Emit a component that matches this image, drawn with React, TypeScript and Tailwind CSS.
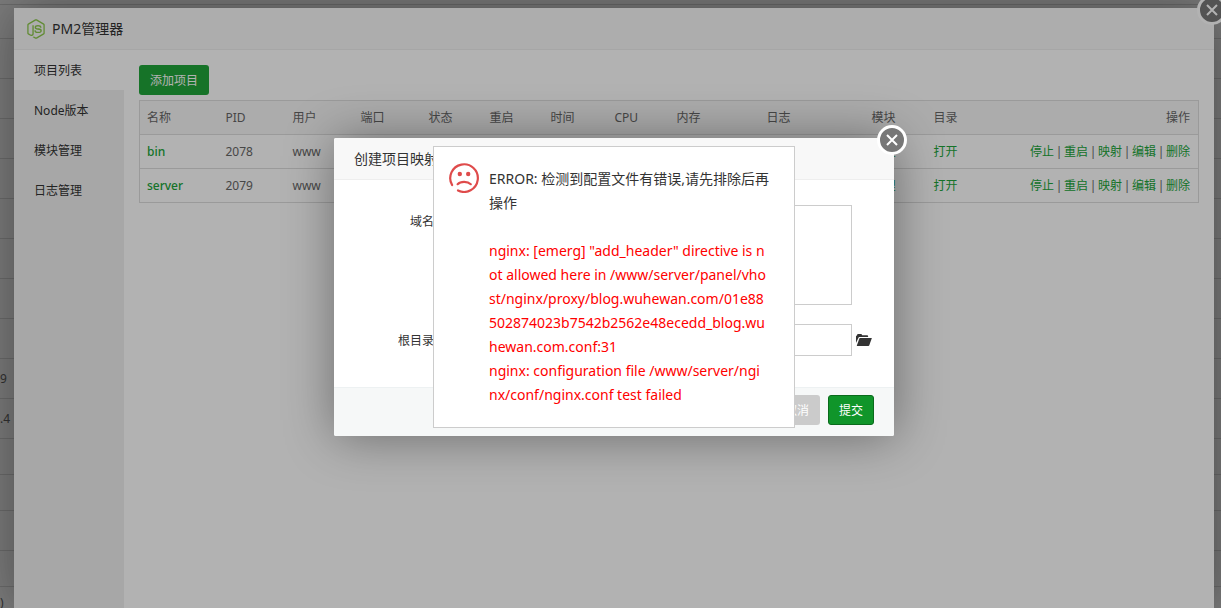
import type { ReactNode } from "react";
import { FaNodeJs } from "react-icons/fa";

const backdropRows: { height: string; text?: string }[] = [
  { height: "h-[5px]" },
  { height: "h-[34px]" },
  { height: "h-10" },
  { height: "h-10" },
  { height: "h-10" },
  { height: "h-10" },
  { height: "h-10" },
  { height: "h-10" },
  { height: "h-10" },
  { height: "h-10" },
  { height: "h-10", text: "9" },
  { height: "h-10", text: ".4" },
  { height: "h-9" },
  { height: "h-9" },
  { height: "h-10" },
  { height: "h-9" },
  { height: "h-8", text: ")" },
];

const menu = ["项目列表", "Node版本", "模块管理", "日志管理"];

const columns = [
  { label: "名称", width: "w-[79px]" },
  { label: "PID", width: "w-[67px]" },
  { label: "用户", width: "w-[68px]" },
  { label: "端口", width: "w-[68px]" },
  { label: "状态", width: "w-[61px]" },
  { label: "重启", width: "w-[61px]" },
  { label: "时间", width: "w-[64px]" },
  { label: "CPU", width: "w-[62px]" },
  { label: "内存", width: "w-[90px]" },
  { label: "日志", width: "w-[105px]" },
  { label: "模块", width: "w-[62px]" },
  { label: "目录", width: "w-[80px]" },
];

const projects = [
  { name: "bin", pid: 2078, user: "www" },
  { name: "server", pid: 2079, user: "www" },
];

const actions = ["停止", "重启", "映射", "编辑", "删除"];

const errorLines = [
  'nginx: [emerg] "add_header" directive is n',
  "ot allowed here in /www/server/panel/vho",
  "st/nginx/proxy/blog.wuhewan.com/01e88",
  "502874023b7542b2562e48ecedd_blog.wu",
  "hewan.com.conf:31",
  "nginx: configuration file /www/server/ngi",
  "nx/conf/nginx.conf test failed",
];

function GreenLink({ children }: { children: ReactNode }) {
  return (
    <a href="#" className="text-[#20a53a]">
      {children}
    </a>
  );
}

function CloseButton() {
  return (
    <button
      type="button"
      aria-label="关闭"
      className="absolute -top-[13px] -right-[13px] flex size-[30px] items-center justify-center rounded-full border-3 border-white bg-[#777]"
    >
      <svg viewBox="0 0 12 12" className="size-3" fill="none" stroke="#fff" strokeWidth="2">
        <path d="M1 1l10 10M11 1L1 11" />
      </svg>
    </button>
  );
}

function SadFace() {
  return (
    <svg viewBox="0 0 30 30" className="size-[30px] shrink-0" fill="none" stroke="#df4b4b" strokeLinecap="round">
      <path d="M3.1 22A13.8 13.8 0 1 1 9 27.5" strokeWidth="2.2" />
      <circle cx="10.8" cy="11" r="2.2" fill="#df4b4b" stroke="none" />
      <circle cx="19.2" cy="11" r="2.2" fill="#df4b4b" stroke="none" />
      <path d="M8.6 21.2c3-3.2 10-3.2 13.2 0" strokeWidth="2.2" />
    </svg>
  );
}

function FolderIcon() {
  return (
    <svg viewBox="0 0 16 12" className="h-3 w-4" fill="#333">
      <path d="M0 9V2.2L1.2 1V.6L1.8 0h3.6l.8 1.2h5.3l.6.7V3H3.2L2.6 3.6z" />
      <path d="M4 4h11.4l.3.6-2.5 6.8-.7.6H1L.8 11.4 3.4 4.5z" />
    </svg>
  );
}

function ManagerWindow() {
  return (
    <section className="relative flex w-full max-w-[1200px] flex-col bg-white shadow-[1px_1px_50px_rgba(0,0,0,0.4)]">
      <CloseButton />
      <header className="flex h-[42px] items-center gap-[6px] border-b border-[#eee] bg-[#f8f8f8] pl-3 text-sm text-[#333]">
        <FaNodeJs className="size-5 text-[#8cc84b]" />
        <h1>PM2管理器</h1>
      </header>
      <div className="flex flex-1">
        <nav className="flex w-[110px] shrink-0 flex-col bg-[#f0f0f0]">
          {menu.map((item, i) => (
            <a
              key={item}
              href="#"
              className={
                i === 0
                  ? "flex h-10 items-center bg-white pt-[2px] pl-5 text-[#333]"
                  : "flex h-10 items-center pt-[2px] pl-5 text-[#333]"
              }
            >
              {item}
            </a>
          ))}
        </nav>
        <main className="min-w-0 flex-1 p-[15px]">
          <button type="button" className="mb-[5px] h-[30px] rounded-[3px] bg-[#20a53a] px-[11px] pt-[2px] text-white">
            添加项目
          </button>
          <table className="w-full table-fixed border border-[#ddd] text-left text-[#666]">
            <thead>
              <tr className="h-[34px] border-b border-[#ddd] bg-[#f6f6f6]">
                {columns.map((c) => (
                  <th key={c.label} className={`${c.width} px-[7px] font-normal`}>
                    {c.label}
                  </th>
                ))}
                <th className="px-2 text-right font-normal">操作</th>
              </tr>
            </thead>
            <tbody>
              {projects.map((p) => (
                <tr key={p.name} className="h-[34px] border-b border-[#ddd]">
                  <td className="px-[7px] font-medium">
                    <GreenLink>{p.name}</GreenLink>
                  </td>
                  <td className="px-[7px]">{p.pid}</td>
                  <td className="px-[7px]">{p.user}</td>
                  <td colSpan={7} />
                  <td className="px-[7px]">
                    <GreenLink>管理</GreenLink>
                  </td>
                  <td className="px-[7px]">
                    <GreenLink>打开</GreenLink>
                  </td>
                  <td className="px-2">
                    <div className="flex justify-end">
                      {actions.map((a, i) => (
                        <span key={a} className="flex">
                          {i > 0 && <span className="w-[10px] text-center">|</span>}
                          <GreenLink>{a}</GreenLink>
                        </span>
                      ))}
                    </div>
                  </td>
                </tr>
              ))}
            </tbody>
          </table>
        </main>
      </div>
    </section>
  );
}

function MappingDialog() {
  return (
    <section
      role="dialog"
      className="relative w-[560px] rounded-[2px] bg-white text-[#333] shadow-[1px_1px_50px_rgba(0,0,0,0.4)]"
    >
      <CloseButton />
      <header className="flex h-[42px] items-center rounded-t-[2px] border-b border-[#eee] bg-[#f8f8f8] px-5 text-sm">
        <h2>创建项目映射</h2>
      </header>
      <form>
        <div className="flex flex-col gap-[19px] pt-[25px] pb-[31px]">
          <div className="flex">
            <label htmlFor="domain" className="w-[100px] pt-[9px] text-right leading-4">
              域名
            </label>
            <textarea id="domain" className="ml-5 h-[100px] w-[398px] resize-none border border-[#ccc] p-2" />
          </div>
          <div className="flex items-center">
            <label htmlFor="root-dir" className="w-[100px] pt-[2px] text-right">
              根目录
            </label>
            <input id="root-dir" type="text" className="ml-5 h-8 w-[398px] border border-[#ccc] px-2" />
            <button type="button" aria-label="选择目录" className="ml-1">
              <FolderIcon />
            </button>
          </div>
        </div>
        <footer className="flex h-[49px] items-center justify-end gap-2 rounded-b-[2px] border-t border-[#edf1f2] bg-[#f6f8f8] px-5 pb-1 text-white">
          <button type="button" className="h-[30px] rounded-[3px] bg-[#cbcbcb] px-[11px] pt-[2px]">
            取消
          </button>
          <button type="submit" className="h-[30px] rounded-[3px] border border-[#0a6b1c] bg-[#10952a] px-[10px] pt-[2px]">
            提交
          </button>
        </footer>
      </form>
    </section>
  );
}

function ErrorMessage() {
  return (
    <section
      role="alert"
      className="flex w-[362px] gap-[10px] border border-[#ccc] bg-white py-5 pl-[15px] text-sm leading-6 text-[#333]"
    >
      <div className="-mt-1">
        <SadFace />
      </div>
      <div className="whitespace-nowrap">
        <p>
          ERROR: 检测到配置文件有错误,请先排除后再
          <br />
          操作
        </p>
        <p className="mt-6 text-[#f00]">
          {errorLines.map((line) => (
            <span key={line} className="block">
              {line}
            </span>
          ))}
        </p>
      </div>
    </section>
  );
}

export default function App() {
  return (
    <div className="relative h-screen overflow-hidden bg-white font-['Noto_Sans','Noto_Sans_CJK_SC',sans-serif] text-xs">
      <div className="text-[#666]">
        {backdropRows.map((row, i) => (
          <div key={i} className={`${row.height} flex items-center border-b border-[#ddd]`}>
            {row.text}
          </div>
        ))}
      </div>
      <div className="absolute inset-0 flex justify-center bg-black/30 pt-2 pl-[7px]">
        <ManagerWindow />
      </div>
      <div className="absolute inset-0 flex items-center justify-center bg-black/30 pb-[34px] pl-[7px]">
        <MappingDialog />
      </div>
      <div className="absolute inset-0 flex items-center justify-center pb-[34px] pl-[7px]">
        <ErrorMessage />
      </div>
    </div>
  );
}
